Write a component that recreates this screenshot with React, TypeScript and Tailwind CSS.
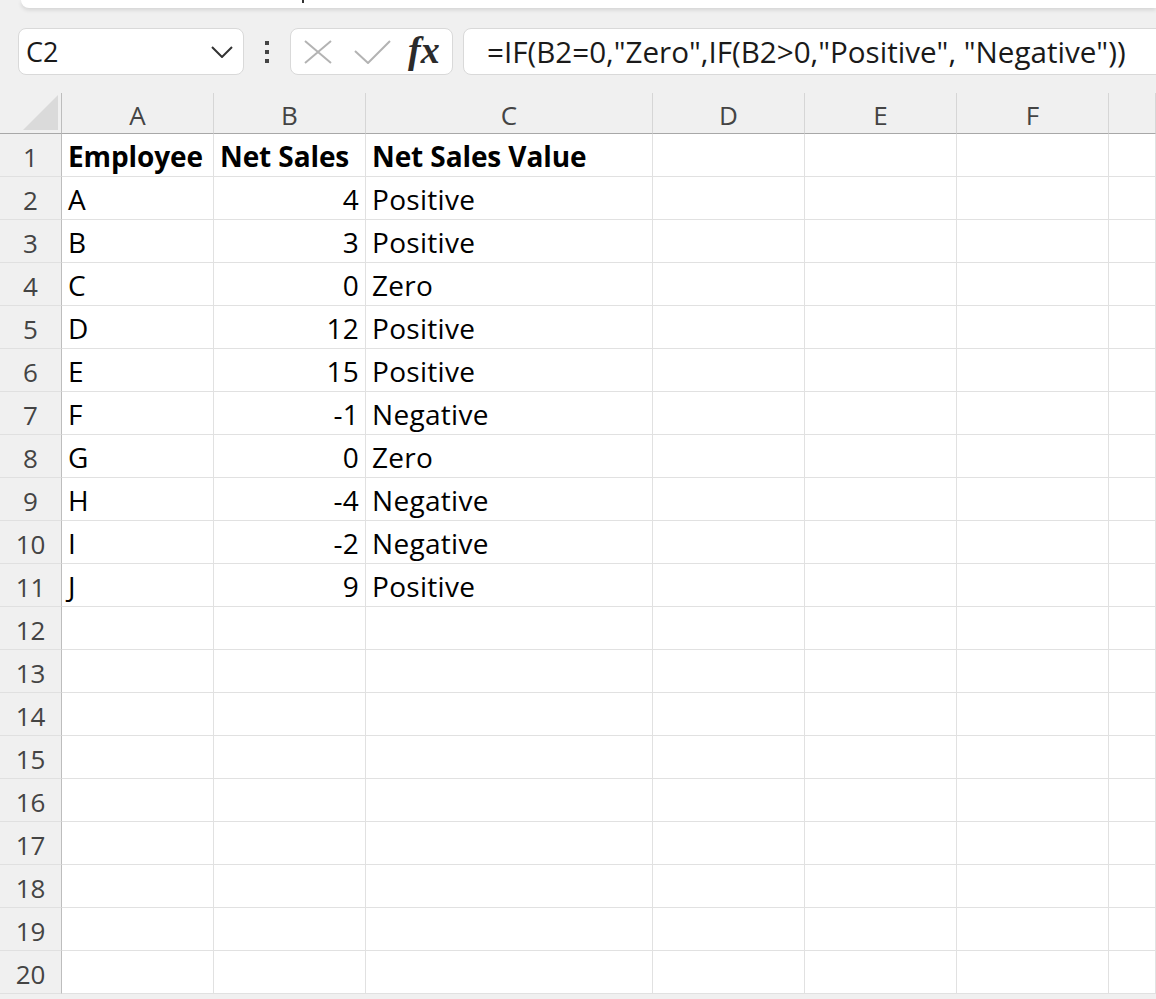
import React from "react";

const rows: [string, string, string][] = [
  ["Employee", "Net Sales", "Net Sales Value"],
  ["A", "4", "Positive"],
  ["B", "3", "Positive"],
  ["C", "0", "Zero"],
  ["D", "12", "Positive"],
  ["E", "15", "Positive"],
  ["F", "-1", "Negative"],
  ["G", "0", "Zero"],
  ["H", "-4", "Negative"],
  ["I", "-2", "Negative"],
  ["J", "9", "Positive"],
];

const cellFont = { fontFamily: '"Open Sans", "Noto Sans", sans-serif' };

export default function App() {
  const allRows = Array.from({ length: 20 }, (_, i) => i);
  return (
    <div
      className="w-[1156px] h-[999px] bg-[#f0f0f0] overflow-hidden flex flex-col"
      style={cellFont}
    >
      {/* top ribbon remnant */}
      <div className="relative h-[8px] ml-[21px] bg-white rounded-bl-[10px] shadow-[0_2px_4px_rgba(0,0,0,0.12)] shrink-0">
        <span className="absolute left-[281px] top-0 w-[2px] h-[3px] bg-[#333]" />
      </div>

      {/* formula bar */}
      <div className="flex items-center h-[47px] mt-[20px] pl-[18px] shrink-0">
        <div className="shrink-0 w-[226px] h-[47px] bg-white border border-[#d9d9d9] rounded-[8px] flex items-center justify-between pl-[7px] pr-[10px]">
          <span className="text-[27px] leading-none text-[#1a1a1a]">C2</span>
          <svg width="22" height="12" viewBox="0 0 22 12" fill="none">
            <path d="M1 1L11 11L21 1" stroke="#333" strokeWidth="2" />
          </svg>
        </div>
        <div className="shrink-0 ml-[21px] mr-[21px] w-[4px] flex flex-col gap-[5px]">
          <span className="w-[4px] h-[4px] bg-[#444]" />
          <span className="w-[4px] h-[4px] bg-[#444]" />
          <span className="w-[4px] h-[4px] bg-[#444]" />
        </div>
        <div className="shrink-0 w-[163px] h-[47px] bg-white border border-[#d9d9d9] rounded-[8px] flex items-center pl-[13px]">
          <svg width="28" height="24" viewBox="0 0 28 24" fill="none">
            <path d="M1 1L27 23M27 1L1 23" stroke="#b3b3b3" strokeWidth="2" />
          </svg>
          <svg className="ml-[22px]" width="37" height="24" viewBox="0 0 37 24" fill="none">
            <path d="M1 11L14 23L36 1" stroke="#b3b3b3" strokeWidth="2" />
          </svg>
          <span
            className="ml-[17px] text-[38px] leading-none italic font-semibold text-[#2b2b2b] -mt-[4px]"
            style={{ fontFamily: '"Liberation Serif", "DejaVu Serif", serif' }}
          >
            fx
          </span>
        </div>
        <div className="shrink-0 ml-[10px] w-[720px] h-[47px] bg-white border border-[#d9d9d9] rounded-l-[8px] flex items-center pl-[23px]">
          <span className="text-[29.6px] leading-none text-[#1a1a1a] whitespace-nowrap">
            =IF(B2=0,"Zero",IF(B2&gt;0,"Positive", "Negative"))
          </span>
        </div>
      </div>

      {/* sheet */}
      <div className="mt-[18px] grid grid-cols-[62px_152px_152px_287px_152px_152px_152px_1fr]">
        {/* header row */}
        <div className="h-[41px] border-r border-r-[#bdbdbd] border-b border-b-[#a8a8a8] flex items-end justify-end pr-[3px] pb-[3px]">
          <svg width="35" height="35" viewBox="0 0 35 35">
            <path d="M35 0L35 35L0 35Z" fill="#dadada" />
          </svg>
        </div>
        {["A", "B", "C", "D", "E", "F", ""].map((c, i) => (
          <div
            key={i}
            className="h-[41px] border-r border-r-[#d6d6d6] border-b border-b-[#a8a8a8] flex items-end justify-center pb-[5px] text-[26px] leading-none text-[#444]"
          >
            {c}
          </div>
        ))}

        {allRows.map((r) => {
          const data = rows[r];
          const bold = r === 0;
          return (
            <React.Fragment key={r}>
              <div className="h-[43px] border-r border-r-[#bdbdbd] border-b border-b-[#e0e0e0] flex items-end justify-center pb-[6px] text-[26px] leading-none text-[#444]">
                {r + 1}
              </div>
              {Array.from({ length: 7 }, (_, c) => {
                const val = data && c < 3 ? data[c] : "";
                const right = c === 1 && r > 0;
                return (
                  <div
                    key={c}
                    className={`h-[43px] bg-white border-r border-b border-[#e1e1e1] flex items-end pb-[6px] text-[28px] leading-none text-black whitespace-nowrap ${
                      right ? "justify-end pr-[6px]" : "pl-[6px]"
                    } ${bold ? "font-bold tracking-[-0.1px]" : "tracking-[0.3px]"}`}
                  >
                    {val}
                  </div>
                );
              })}
            </React.Fragment>
          );
        })}
      </div>
    </div>
  );
}
